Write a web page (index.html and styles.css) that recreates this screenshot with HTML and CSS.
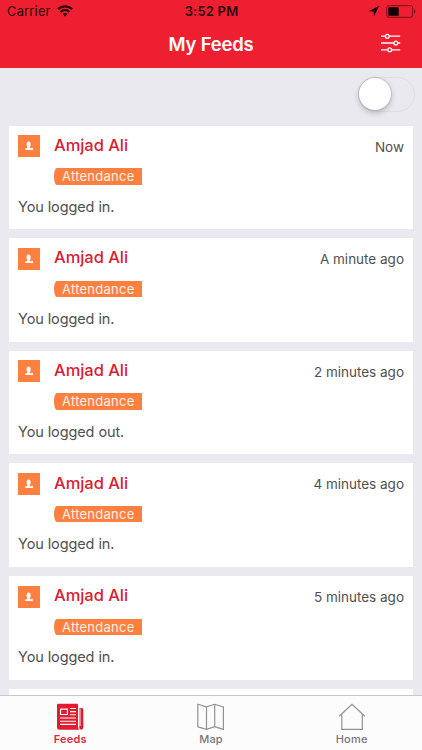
FILE: index.html
```html
<!DOCTYPE html>
<html lang="en">
<head>
<meta charset="utf-8">
<title>My Feeds</title>
<link rel="stylesheet" href="styles.css">
</head>
<body>
<svg class="defs" width="0" height="0">
  <symbol id="person" viewBox="0 0 22 22">
    <ellipse cx="10.6" cy="9.4" rx="2" ry="2.8"/>
    <path d="M9.5 11h2.2v2l2 .9v1.1H7.2v-1c0-.7 1.2-.8 2.3-1.2z"/>
    <circle cx="13.9" cy="14" r="1.3"/>
  </symbol>
</svg>
<div class="screen">
  <header class="header">
    <div class="status">
      <div class="carrier"><span>Carrier</span>
        <svg width="16" height="12" viewBox="0 0 16 12"><path d="M8 11.4 5.6 9a3.4 3.4 0 0 1 4.8 0z" fill="#2b0609"/><path d="M3.4 6.9a6.5 6.5 0 0 1 9.2 0M.9 4.3a10 10 0 0 1 14.2 0" fill="none" stroke="#2b0609" stroke-width="2.1"/></svg>
      </div>
      <span class="time">3:52 PM</span>
      <div class="power">
        <svg width="12" height="12" viewBox="0 0 12 12"><path d="M11.3.8.6 6.2l5 .3.3 5z" fill="#1c0406"/></svg>
        <svg width="30" height="13" viewBox="0 0 30 13"><rect x=".7" y=".7" width="26" height="11.6" rx="2.3" fill="none" stroke="#79121b"/><rect x="2.3" y="2.3" width="10.4" height="8.4" rx=".6" fill="#120203"/><path d="M28 4.2q1.4.5 1.4 2.3T28 8.8z" fill="#79121b"/></svg>
      </div>
    </div>
    <div class="navbar">
      <h1>My Feeds</h1>
      <svg class="filter" width="22" height="20" viewBox="0 0 22 20" fill="none" stroke="#fff" stroke-width="1.3"><path d="M1 3.2h4.3m4 0h10.9M1 10h12.8m4 0h2.4M1 16.8h6.7m4 0h8.5"/><circle cx="7.3" cy="3.2" r="1.9"/><circle cx="15.8" cy="10" r="1.9"/><circle cx="9.7" cy="16.8" r="1.9"/></svg>
    </div>
  </header>
  <div class="toolbar"><div class="switch"><div class="knob"></div></div></div>
  <main class="feed">
    <article class="card">
      <div class="avatar"><svg><use href="#person"/></svg></div>
      <div class="who"><h2>Amjad Ali</h2><span class="tag">Attendance</span></div>
      <time>Now</time>
      <p>You logged in.</p>
    </article>
    <article class="card">
      <div class="avatar"><svg><use href="#person"/></svg></div>
      <div class="who"><h2>Amjad Ali</h2><span class="tag">Attendance</span></div>
      <time>A minute ago</time>
      <p>You logged in.</p>
    </article>
    <article class="card">
      <div class="avatar"><svg><use href="#person"/></svg></div>
      <div class="who"><h2>Amjad Ali</h2><span class="tag">Attendance</span></div>
      <time>2 minutes ago</time>
      <p>You logged out.</p>
    </article>
    <article class="card">
      <div class="avatar"><svg><use href="#person"/></svg></div>
      <div class="who"><h2>Amjad Ali</h2><span class="tag">Attendance</span></div>
      <time>4 minutes ago</time>
      <p>You logged in.</p>
    </article>
    <article class="card">
      <div class="avatar"><svg><use href="#person"/></svg></div>
      <div class="who"><h2>Amjad Ali</h2><span class="tag">Attendance</span></div>
      <time>5 minutes ago</time>
      <p>You logged in.</p>
    </article>
    <article class="card"></article>
  </main>
  <nav class="tabs">
    <a class="tab active">
      <svg width="28" height="28" viewBox="0 0 28 28"><path d="M2.3.8h18.4q1.3 0 1.3 1.3v21.5q0 2.6 1.6 3.2H3.5Q1 26.8 1 24.3V2.1Q1 .8 2.3.8z" fill="#e11b30"/><path d="M23.2 5h2.5q1.6 0 1.6 1.6v17.5q0 2.7-2 2.7-2.1 0-2.1-2.7z" fill="#e11b30"/><path d="M24 5.5v17.5" stroke="#fff" stroke-width=".9"/><path d="M4.6 6.1h6.8v5.4H4.6zM14 5.5h6M14 8.6h6M14 11.8h6M4 15h16M4 18.2h16M4 21.4h16" fill="none" stroke="#fff" stroke-width="1.1"/></svg>
      <span>Feeds</span>
    </a>
    <a class="tab">
      <svg width="28" height="28" viewBox="0 0 28 28" fill="none" stroke="#929292" stroke-width="1.2"><path d="M.8 1.3 9.5 3.9l8.2-2.6 8.7 2.6v22.5l-8.7-2.7-8.2 2.7-8.7-2.7zM9.5 3.9v22.5m8.2-25.1v22.4"/></svg>
      <span>Map</span>
    </a>
    <a class="tab">
      <svg width="28" height="28" viewBox="0 0 28 28" fill="none" stroke="#929292" stroke-width="1.2"><path d="M1.2 13.2 14 1.4l12.8 11.8M3.8 11v15.3h20.5V11"/></svg>
      <span>Home</span>
    </a>
  </nav>
</div>
</body>
</html>
```
FILE: styles.css
```css
* { box-sizing: border-box; }
body { margin: 0; font-family: Inter, "Liberation Sans", sans-serif; }
svg { display: block; flex: none; }
.defs { position: absolute; }
.screen { width: 422px; height: 750px; overflow: hidden; display: flex; flex-direction: column; background: #eae9f0; }
.header { height: 68px; flex: none; background: #ee1f31; }
.status { height: 22px; display: grid; grid-template-columns: 1fr auto 1fr; align-items: center; padding: 0 6px 0 7px; color: #2b0609; font-size: 13px; line-height: 22px; }
.carrier { display: flex; align-items: center; gap: 6px; letter-spacing: .15px; }
.time { font-weight: 600; letter-spacing: .2px; }
.power { display: flex; align-items: center; justify-content: flex-end; gap: 6px; }
.navbar { height: 44px; display: grid; grid-template-columns: 1fr auto 1fr; align-items: center; padding: 0 20px; }
h1 { grid-column: 2; margin: 0; color: #fff; font-size: 18.5px; line-height: 24px; font-weight: 600; letter-spacing: -.2px; }
.filter { justify-self: end; margin-top: -2px; }
.toolbar { height: 57.5px; flex: none; display: flex; justify-content: flex-end; padding: 9px 7px 0 0; }
.switch { width: 57px; height: 35px; border: 1.5px solid #dfdfe4; border-radius: 18px; }
.knob { width: 32px; height: 32px; border-radius: 50%; background: #fff; box-shadow: 0 3px 6px rgba(0,0,0,.2), 0 0 1px 1px rgba(0,0,0,.12); }
.feed { flex: 1; min-height: 0; overflow: hidden; padding: 0 9px; }
.card { height: 103.7px; margin-bottom: 8.95px; padding: 9px 9px 0; background: #fff; display: grid; grid-template-columns: 36px 1fr auto; grid-template-rows: 61px auto; align-items: start; color: #505050; }
.avatar { width: 22px; height: 22px; margin-top: .5px; background: #fe8040; }
.avatar svg { width: 22px; height: 22px; fill: #fff; }
h2 { margin: -.8px 0 0; color: #d91c32; font-size: 16.5px; line-height: 22px; font-weight: 500; letter-spacing: -.05px; }
.tag { display: block; width: 88px; height: 16.5px; margin-top: 12.3px; padding-left: 8px; background: #fe8040; color: #fff1e4; border-radius: 3px 0 0 3px / 8px 0 0 8px; font-size: 13px; line-height: 17px; letter-spacing: .25px; }
time { font-size: 13.5px; line-height: 20px; padding-top: 2px; }
p { grid-column: 1 / -1; margin: 0; font-size: 14.5px; line-height: 22px; letter-spacing: -.1px; }
.tabs { height: 55px; flex: none; display: grid; grid-template-columns: repeat(3, 1fr); background: #fcfcfc; border-top: 1px solid #c8c8cb; }
.tab { display: flex; flex-direction: column; align-items: center; padding-top: 7px; color: #777; font-size: 11px; font-weight: 500; line-height: 14px; letter-spacing: .2px; }
.tab span { margin-top: .5px; }
.active { color: #dd293c; font-weight: 600; }
```
